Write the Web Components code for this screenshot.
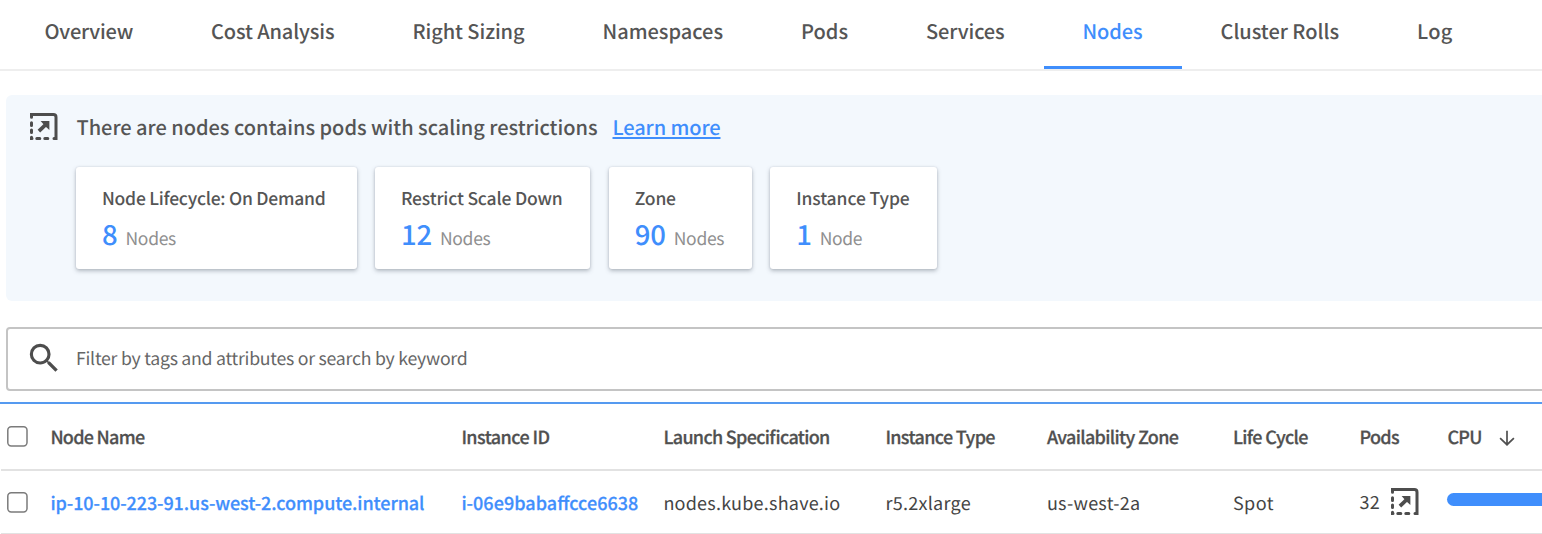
<!DOCTYPE html>
<html lang="en">
<head>
<meta charset="utf-8">
<title>Nodes</title>
<style>
body { margin: 0; background: #fff; color: #555; overflow: hidden;
  font-family: "Noto Sans CJK SC", "Open Sans", sans-serif; text-rendering: geometricPrecision; }
</style>
</head>
<body>
<nodes-page></nodes-page>
<script>
const define = (name, html, setup) => customElements.define(name, class extends HTMLElement {
  connectedCallback() {
    if (this.shadowRoot) return;
    const t = document.createElement('template');
    t.innerHTML = html;
    this.attachShadow({ mode: 'open' }).appendChild(t.content.cloneNode(true));
    if (setup) setup(this, this.shadowRoot);
  }
});

/* A single line of text tracked to a set measure. */
define('fit-text', `<style>:host{display:inline-block;justify-self:start;white-space:nowrap;font-feature-settings:"liga" 1}</style><slot></slot>`,
  (el) => {
    const w = parseFloat(el.getAttribute('w'));
    const n = el.textContent.length;
    el.style.letterSpacing = (w - el.getBoundingClientRect().width) / n + 'px';
    el.style.width = w + 'px';
  });

define('scale-icon', `<style>:host{display:block;width:28px;height:28px}svg{display:block}</style>
<svg width="28" height="28" viewBox="0 0 28 28" fill="none" stroke="#4d4d4d" stroke-width="3" stroke-linecap="round">
<path d="M1.5 4.3V1.5H23.3Q26 1.5 26 4.2V25.6H24"/>
<path d="M1.5 9.8V12.6M1.5 17V19.4M1.5 24.3V25.6H2M6.8 25.6H9.8M14.8 25.6H17.8"/>
<path d="M8.9 18.1L16.5 10.8" stroke-width="3.7" stroke-linecap="butt"/>
<path d="M10.6 7.9H19.4V16.9L16.6 14.6L12.8 10.6Z" fill="#4d4d4d" stroke="none"/>
</svg>`);

define('search-icon', `<style>:host{display:block;width:38.4px;height:38.4px}svg{display:block}</style>
<svg width="38.4" height="38.4" viewBox="0 0 24 24" fill="#4d4d4d"><path d="M15.5 14h-.79l-.28-.27A6.471 6.471 0 0 0 16 9.5 6.5 6.5 0 1 0 9.5 16c1.61 0 3.09-.59 4.23-1.57l.27.28v.79l5 4.99L20.49 19l-4.99-5zm-6 0C7.01 14 5 11.99 5 9.5S7.01 5 9.5 5 14 7.01 14 9.5 11.99 14 9.5 14z"/></svg>`);

define('sort-arrow', `<style>:host{display:block;width:16px;height:16px}svg{display:block}</style>
<svg width="16" height="16" viewBox="0 0 16 16" fill="none" stroke="#505050" stroke-width="1.7"><path d="M8 .7V14.5M1.1 8.1L8 14.7L14.9 8.1"/></svg>`);

define('check-box', `<style>:host{display:block;width:21px;height:21px}svg{display:block}</style>
<svg width="21" height="21" viewBox="0 0 21 21"><rect x=".8" y=".8" width="19.2" height="19.2" rx="3.4" fill="#fff" stroke="#7b7b7b" stroke-width="1.5"/></svg>`);

define('tab-item', `<style>
:host{display:block;box-sizing:border-box;height:69px;padding:0 39px;font-size:20px;font-weight:500;line-height:61px;border-bottom:3px solid transparent}
:host([active]){color:#3f8efc;border-color:#3f8efc}
</style><slot></slot>`);

define('tab-bar', `<style>:host{display:flex;height:69px;padding-left:5.5px;border-bottom:2px solid #eee}</style><slot></slot>`);

define('stat-card', `<style>
:host{display:block;flex:none;box-sizing:border-box;height:102px;padding:19px 0 0 26px;background:#fff;border-radius:3px;box-shadow:0 2px 4px rgba(60,70,85,.34),0 0 2px rgba(60,70,85,.16)}
.t{font-size:17.5px;font-weight:500;line-height:26px;height:26px}
.v{display:flex;align-items:baseline;gap:8px;line-height:42px;height:42px}
.n{font-size:27.5px;font-weight:500;color:#3f8efc;letter-spacing:-.2px}
.u{font-size:17.5px;color:#8f8f8f}
</style><div class="t"><slot name="title"></slot></div><div class="v"><span class="n"><slot name="count"></slot></span><span class="u"><slot name="unit"></slot></span></div>`);

define('restriction-banner', `<style>
:host{display:block;box-sizing:border-box;height:206px;margin:24px 0 0 6px;padding:17px 0 0 24px;background:#f3f8fd;border-radius:6px 0 0 6px}
.h{display:flex;align-items:flex-start;font-size:20px;font-weight:500;line-height:30px;height:30px}
scale-icon{margin:0 18.5px 0 0}
scale-icon{padding-top:.5px}
.c{display:flex;margin:25px 0 0 46px;gap:18.5px}
.l{margin-left:15px;color:#3f8efc}
</style><div class="h"><scale-icon></scale-icon><slot></slot><a class="l"><slot name="link"></slot></a></div><div class="c"><slot name="cards"></slot></div>`);

define('search-field', `<style>
:host{display:flex;box-sizing:border-box;height:64px;margin:26px -4px 0 6px;padding:10px 0 0 17px;border:2px solid #c4c4c4;border-radius:4px;font-size:17.7px;line-height:38px;color:#666}
::slotted(fit-text){margin-left:12.6px}
</style><search-icon></search-icon><slot></slot>`);

define('table-row', `<style>
:host{display:grid;box-sizing:border-box;height:64px;align-items:center;padding-left:6.6px;margin-left:.5px;border-bottom:2px solid #e2e2e2;grid-template-columns:43.3px 411px 202px 222px 161.5px 186px 126.5px 88px 1fr;font-size:18px;line-height:26px;color:#444}
:host([head]){height:67px;font-weight:500;color:#505050;-webkit-text-stroke:.25px}
:host(:not([head])) ::slotted(fit-text){padding-top:2px}
::slotted(.link){color:#3f8efc;font-weight:500;-webkit-text-stroke:.25px}
::slotted(.pair){display:flex;align-items:center}
</style><slot></slot>`);

define('usage-bar', `<style>:host{display:block;height:13px;margin:0 -10px 6px 0;border-radius:7px;background:#3f8efc}</style>`);

define('node-table', `<style>:host{display:block;margin-top:11px;border-top:2px solid #559af0}</style><slot></slot>`);

define('nodes-page', `<style>
:host{display:block;width:1542px;height:534px;overflow:hidden}
.link-text{text-decoration:underline;text-decoration-thickness:1.6px;text-underline-offset:2px}
</style>
<tab-bar>
<tab-item><fit-text w="88.5">Overview</fit-text></tab-item>
<tab-item><fit-text w="123.5">Cost Analysis</fit-text></tab-item>
<tab-item><fit-text w="112">Right Sizing</fit-text></tab-item>
<tab-item><fit-text w="120.5">Namespaces</fit-text></tab-item>
<tab-item><fit-text w="47">Pods</fit-text></tab-item>
<tab-item><fit-text w="78.5">Services</fit-text></tab-item>
<tab-item active><fit-text w="60">Nodes</fit-text></tab-item>
<tab-item><fit-text w="118.5">Cluster Rolls</fit-text></tab-item>
<tab-item><fit-text w="35.5">Log</fit-text></tab-item>
</tab-bar>
<restriction-banner>
<fit-text w="521">There are nodes contains pods with scaling restrictions</fit-text>
<fit-text class="link-text" slot="link" w="108">Learn more</fit-text>
<stat-card slot="cards" style="width:280.5px"><fit-text slot="title" w="223.5">Node Lifecycle: On Demand</fit-text><span slot="count">8</span><fit-text slot="unit" w="50.5">Nodes</fit-text></stat-card>
<stat-card slot="cards" style="width:215px;margin-left:.3px;padding-left:25.7px"><fit-text slot="title" w="161.5">Restrict Scale Down</fit-text><span slot="count">12</span><fit-text slot="unit" w="50.5">Nodes</fit-text></stat-card>
<stat-card slot="cards" style="width:143px"><fit-text slot="title" w="41">Zone</fit-text><span slot="count">90</span><fit-text slot="unit" w="50.5">Nodes</fit-text></stat-card>
<stat-card slot="cards" style="width:167px;margin-left:.2px;padding-left:25.7px"><fit-text slot="title" w="113.5">Instance Type</fit-text><span slot="count">1</span><fit-text slot="unit" w="42.5">Node</fit-text></stat-card>
</restriction-banner>
<search-field><fit-text w="391.5">Filter by tags and attributes or search by keyword</fit-text></search-field>
<node-table>
<table-row head>
<check-box></check-box>
<fit-text w="94">Node Name</fit-text>
<fit-text w="88">Instance ID</fit-text>
<fit-text w="165.5">Launch Specification</fit-text>
<fit-text w="109.5">Instance Type</fit-text>
<fit-text w="131.5">Availability Zone</fit-text>
<fit-text w="75">Life Cycle</fit-text>
<fit-text w="39.5">Pods</fit-text>
<div class="pair"><fit-text w="34.5">CPU</fit-text><sort-arrow style="margin:3px 0 0 17.5px"></sort-arrow></div>
</table-row>
<table-row>
<check-box></check-box>
<fit-text class="link" w="374">ip-10-10-223-91.us-west-2.compute.internal</fit-text>
<fit-text class="link" w="177">i-06e9babaffcce6638</fit-text>
<fit-text w="177">nodes.kube.shave.io</fit-text>
<fit-text w="85.5">r5.2xlarge</fit-text>
<fit-text w="93.5">us-west-2a</fit-text>
<fit-text w="41">Spot</fit-text>
<div class="pair"><fit-text w="20.5">32</fit-text><scale-icon style="margin-left:11.5px"></scale-icon></div>
<usage-bar></usage-bar>
</table-row>
</node-table>`);
</script>
</body>
</html>
